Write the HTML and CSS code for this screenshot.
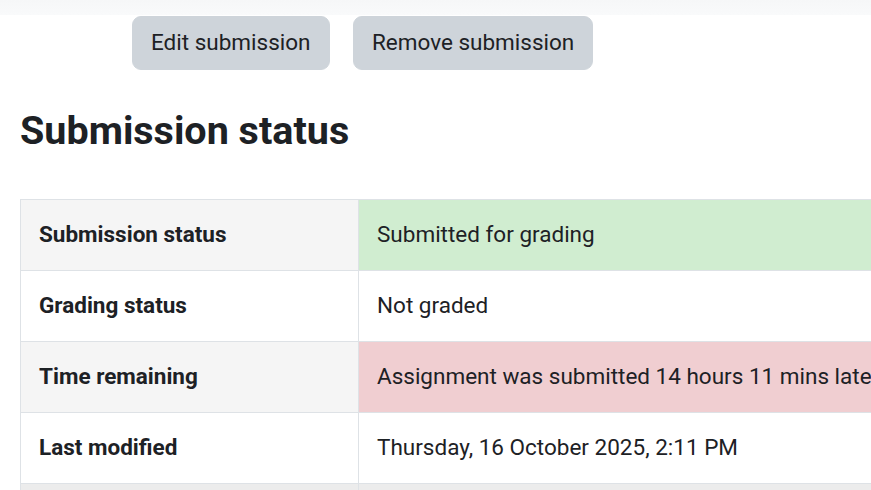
FILE: index.html
```html
<!DOCTYPE html>
<html lang="en">
<head>
<meta charset="utf-8">
<title>Submission status</title>
<link rel="stylesheet" href="styles.css">
</head>
<body>
<div class="topband"></div>
<main class="page">
  <div class="actions">
    <button class="btn" type="button">Edit submission</button>
    <button class="btn" type="button">Remove submission</button>
  </div>
  <h2 class="title">Submission status</h2>
  <div class="tablewrap">
  <table class="status">
    <tbody>
      <tr class="odd">
        <th>Submission status</th>
        <td class="ok">Submitted for grading</td>
      </tr>
      <tr>
        <th>Grading status</th>
        <td>Not graded</td>
      </tr>
      <tr class="odd">
        <th>Time remaining</th>
        <td class="late">Assignment was submitted 14 hours 11 mins late</td>
      </tr>
      <tr>
        <th>Last modified</th>
        <td>Thursday, 16 October 2025, 2:11 PM</td>
      </tr>
      <tr class="odd next">
        <th></th>
        <td></td>
      </tr>
    </tbody>
  </table>
  </div>
</main>
</body>
</html>
```

FILE: styles.css
```css
html, body {
  margin: 0;
  padding: 0;
  background: #ffffff;
}
body {
  font-family: Roboto, "Liberation Sans", sans-serif;
  color: #1d2125;
  font-size: 22.5px;
  line-height: 1.5;
  width: 871px;
  height: 490px;
  overflow: hidden;
}
.topband {
  height: 15px;
  background: linear-gradient(#f6f7f8, #f9fafb);
}
.page {
  padding-left: 20px;
}
.actions {
  display: flex;
  gap: 23.5px;
  padding-left: 112px;
  margin-top: 1px;
}
.btn {
  font-family: inherit;
  font-size: 22.5px;
  line-height: 33.75px;
  color: #1d2125;
  background: #ced4da;
  border: 1.5px solid #ced4da;
  border-radius: 9px;
  padding: 9px 18px;
  margin: 0;
  height: 54px;
}
.title {
  font-size: 39.5px;
  line-height: 48px;
  font-weight: 700;
  margin: 37px 0 44px 0;
}
.tablewrap {
  overflow: hidden;
}
.status {
  border-collapse: collapse;
  width: 1100px;
  table-layout: fixed;
}
.status th,
.status td {
  border: 1px solid #dee2e6;
  padding: 17px 18px 19px 18px;
  text-align: left;
  vertical-align: top;
  line-height: 34px;
  height: 34px;
  white-space: nowrap;
}
.status th {
  width: 301px;
  font-weight: 700;
}
.status tr.odd th,
.status tr.odd td {
  background: #f5f5f5;
}
.status tr.odd td.ok {
  background: #d0edd0;
}
.status tr.odd td.late {
  background: #f0ced1;
}
.status tr.next th,
.status tr.next td {
  background: #ececec;
}
```
